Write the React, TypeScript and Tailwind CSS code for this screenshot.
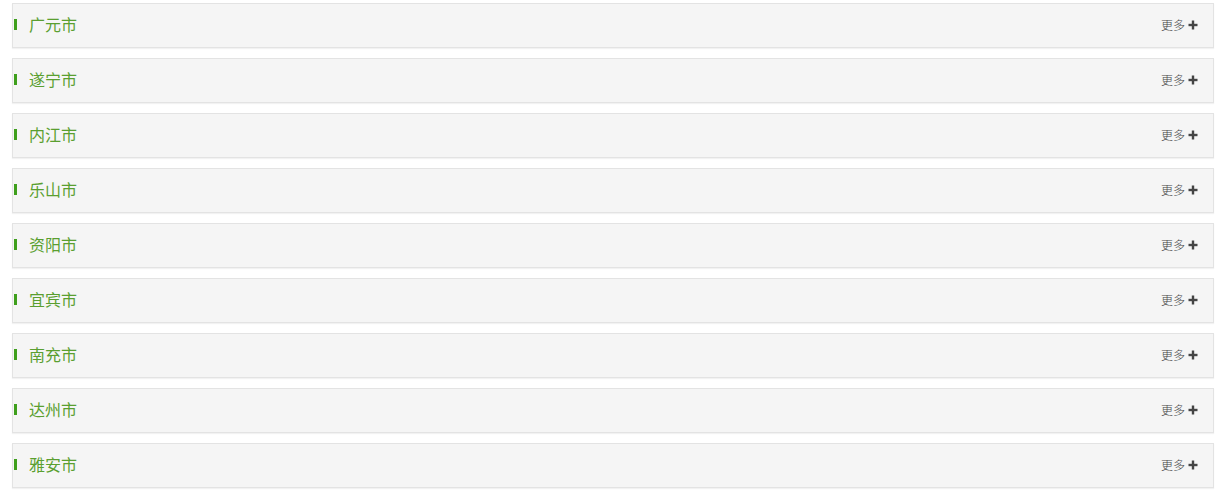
import React from "react";

const cities = ["广元市", "遂宁市", "内江市", "乐山市", "资阳市", "宜宾市", "南充市", "达州市", "雅安市"];

export default function App() {
  return (
    <div
      className="w-[1229px] h-[492px] bg-white pt-[3px] pl-[12px] flex flex-col gap-[10px]"
      style={{ fontFamily: '"Microsoft YaHei", "Noto Sans CJK SC", sans-serif' }}
    >
      {cities.map((c) => (
        <div
          key={c}
          className="w-[1202px] h-[45px] bg-[#f5f5f5] border border-[#e3e3e3] shadow-[0_1px_1px_rgba(0,0,0,0.05)] flex items-center pb-[3px]"
        >
          <div className="w-[3px] h-[11px] bg-[#3f9f1c] ml-[1px] mt-[1px]" />
          <span className="ml-[12px] text-[16px] leading-none font-normal text-[#5a9f30]">{c}</span>
          <div className="ml-auto mr-[15px] flex items-center gap-[3px] text-[#444] mt-[1px]">
            <span className="text-[12px] leading-none font-light">更多</span>
            <svg width="10" height="10" viewBox="0 0 10 10">
              <rect x="3.8" y="0.5" width="2.4" height="9" fill="#444" />
              <rect x="0.5" y="3.8" width="9" height="2.4" fill="#444" />
            </svg>
          </div>
        </div>
      ))}
    </div>
  );
}
